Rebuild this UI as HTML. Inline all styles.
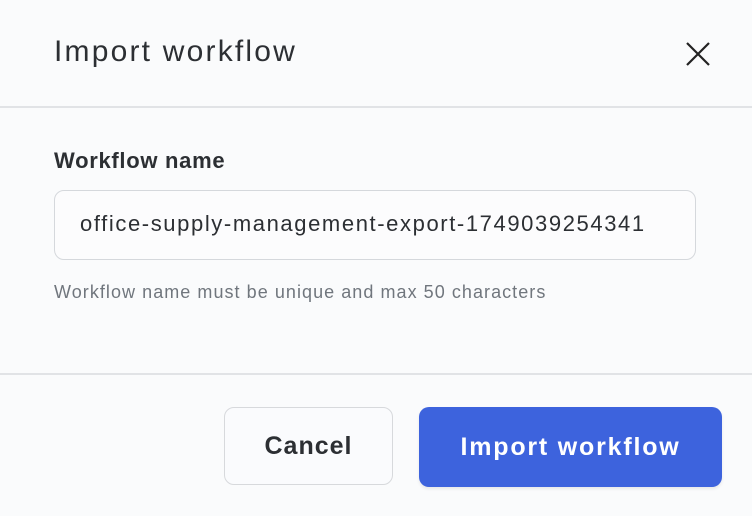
<!DOCTYPE html>
<html><head><style>
body{margin:0;width:752px;height:516px;background:#fafbfc;font-family:"Liberation Sans",sans-serif;position:relative;overflow:hidden;color:#2c2f33}
.a{position:absolute}
</style></head><body>
<div class="a" style="left:54px;top:33px;font-size:30px;line-height:38px;letter-spacing:2.2px;color:#2c2f33">Import workflow</div>
<svg class="a" style="left:684px;top:40px" width="28" height="28" viewBox="0 0 28 28"><path d="M3 3L25 25M25 3L3 25" stroke="#222" stroke-width="2.2"/></svg>
<div class="a" style="left:0;top:106px;width:752px;height:2px;background:#e1e3e6"></div>
<div class="a" style="left:54px;top:147px;font-size:22px;font-weight:bold;letter-spacing:0.7px;color:#2c2f33;line-height:28px">Workflow name</div>
<div class="a" style="left:54px;top:190px;width:640px;height:68px;border:1.5px solid #d5d8dc;border-radius:10px;background:#fcfcfd"></div>
<div class="a" style="left:80px;top:210px;font-size:22px;letter-spacing:1.6px;line-height:28px;color:#2c2f33">office-supply-management-export-1749039254341</div>
<div class="a" style="left:54px;top:281px;font-size:18px;letter-spacing:1.05px;line-height:22px;color:#70767d">Workflow name must be unique and max 50 characters</div>
<div class="a" style="left:0;top:373px;width:752px;height:2px;background:#e1e3e6"></div>
<div class="a" style="left:224px;top:407px;width:167px;height:76px;border:1.5px solid #d7d9dc;border-radius:10px;background:#fafbfd;display:flex;align-items:center;justify-content:center;font-size:25px;font-weight:bold;letter-spacing:1px;color:#2c2f33">Cancel</div>
<div class="a" style="left:419px;top:407px;width:303px;height:80px;border-radius:10px;background:#3d63dd;display:flex;align-items:center;justify-content:center;font-size:25px;font-weight:bold;letter-spacing:1.8px;color:#fff;box-shadow:0 2px 3px rgba(0,0,0,0.08)">Import workflow</div>
</body></html>
